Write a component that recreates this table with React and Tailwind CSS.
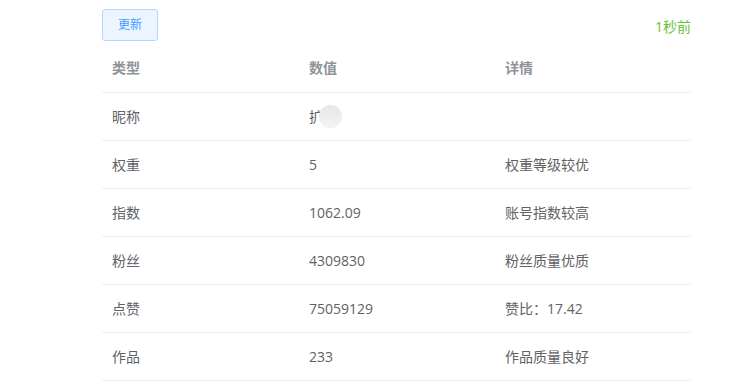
import React from 'react';

const rows = [
  { type: '昵称', value: '扩', detail: '', avatar: true },
  { type: '权重', value: '5', detail: '权重等级较优' },
  { type: '指数', value: '1062.09', detail: '账号指数较高' },
  { type: '粉丝', value: '4309830', detail: '粉丝质量优质' },
  { type: '点赞', value: '75059129', detail: '赞比：17.42' },
  { type: '作品', value: '233', detail: '作品质量良好' },
];

const App = () => {
  return (
    <div
      className="w-[756px] h-[382px] bg-white overflow-hidden"
      style={{ fontFamily: '"Open Sans", "Noto Sans CJK SC", sans-serif' }}
    >
      <div className="ml-[102px] w-[589px] pt-[9px]">
        <div className="flex items-start justify-between h-[35px]">
          <button className="h-[32px] px-[15px] text-[12px] leading-none text-[#409eff] bg-[#ecf5ff] border border-[#b3d8ff] rounded-[3px]">
            更新
          </button>
          <span className="mt-[8px] text-[14px] leading-[20px] text-[#67c23a]">1秒前</span>
        </div>

        <table className="w-full table-fixed border-collapse text-[14px]">
          <thead>
            <tr className="border-b border-[#ebeef5]">
              <th className="w-[197px] h-[48px] px-[10px] text-left font-bold text-[#909399]">类型</th>
              <th className="w-[196px] h-[48px] px-[10px] text-left font-bold text-[#909399]">数值</th>
              <th className="h-[48px] px-[10px] text-left font-bold text-[#909399]">详情</th>
            </tr>
          </thead>
          <tbody>
            {rows.map((r) => (
              <tr key={r.type} className="border-b border-[#ebeef5]">
                <td className="h-[48px] px-[10px] text-[#606266]">{r.type}</td>
                <td className="h-[48px] px-[10px] text-[#606266]">
                  {r.avatar ? (
                    <div className="flex items-center">
                      <span>{r.value}</span>
                      <span className="-ml-[4px] w-[23px] h-[23px] rounded-full bg-gradient-to-b from-[#e6e7e9] to-[#f3f4f5] blur-[0.5px]" />
                    </div>
                  ) : (
                    r.value
                  )}
                </td>
                <td className="h-[48px] px-[10px] text-[#606266]">{r.detail}</td>
              </tr>
            ))}
          </tbody>
        </table>
      </div>
    </div>
  );
};

export default App;
